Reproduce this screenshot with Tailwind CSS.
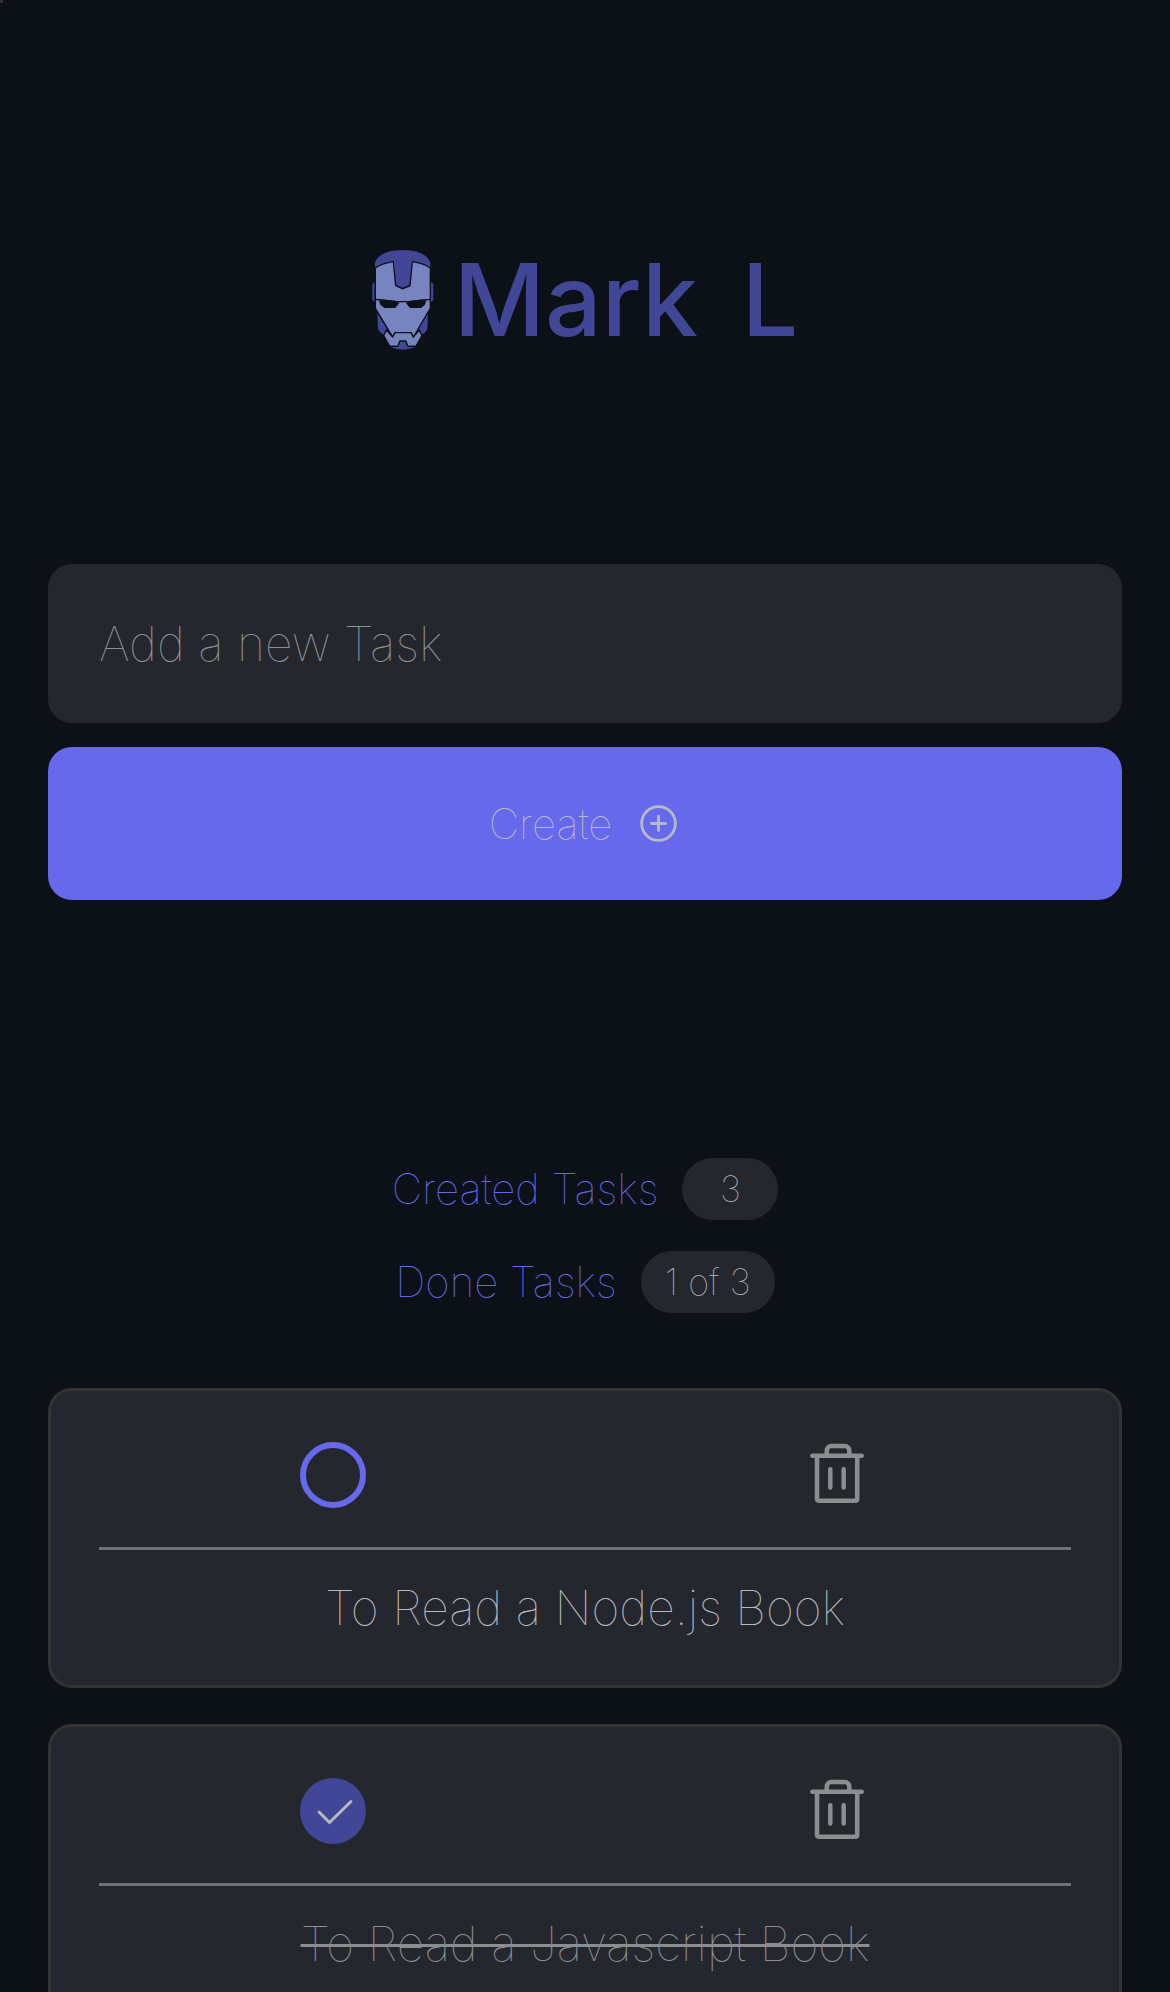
<!DOCTYPE html>
<html lang="en">
<head>
<meta charset="utf-8">
<meta name="viewport" content="width=device-width, initial-scale=1">
<title>Mark L</title>
<script src="https://cdn.jsdelivr.net/npm/@tailwindcss/browser@4"></script>
</head>
<body class="h-screen overflow-hidden bg-[#0c1117] px-12 font-['Inter',sans-serif] font-thin text-[#b8b9bb]">
<div class="absolute left-0 top-0 size-[3px] bg-[#2e3138]"></div>

<header class="flex h-[564px] items-center justify-center gap-5 pt-9">
  <svg class="h-[100px] w-[62px]" viewBox="33 30 186 300" aria-hidden="true">
    <path fill="#424697" d="M41 126L34 132V180L41 186ZM210 126L217 132V180L210 186Z"/>
    <path fill="#424697" d="M42 85V68Q55 31 125 30Q195 31 208 68V85Z"/>
    <path fill="#424697" d="M49 220L51 267Q58 281 70 284L79 268ZM201 220L199 267Q192 281 180 284L171 268Z"/>
    <path fill="#424697" d="M90 322Q125 336 161 322L137 315L132 303H118L113 315Z"/>
    <g fill="#7784c0" stroke="#0c1117" stroke-width="4" stroke-linejoin="miter">
      <path d="M43 84Q65 69 97 65L104 137L125 146L147 137L154 65Q186 69 208 84V178Q177 180 145 185H106Q74 180 43 178Z"/>
      <path d="M43 178Q74 180 106 185H145Q177 180 208 178V205L157 291L150 278H102L95 291L43 205Z"/>
      <path d="M76 270L95 291L102 278H150L157 291L175 270L183 287L165 318L141 319L134 303H117L110 319L86 318L68 287Z"/>
    </g>
    <path fill="#424697" d="M99 64L106 135L125 143L145 135L152 64Z"/>
    <path fill="#0c1117" d="M54 181Q83 181 107 186L116 188L103 204H70L58 194ZM196 181Q167 181 143 186L134 188L147 204H180L192 194Z"/>
  </svg>
  <h1 class="flex gap-11 text-[100px] font-medium leading-none text-[#424697]"><span>Mark</span> <span>L</span></h1>
</header>

<main>
  <form class="flex flex-col gap-6">
    <input type="text" aria-label="New task" placeholder="Add a new Task" class="h-[159px] w-full rounded-3xl bg-[#24272e] px-[51px] text-[48px] outline-none placeholder:text-[#8d9092]">
    <button type="button" class="flex h-[153px] w-full items-center justify-center gap-6 rounded-3xl bg-[#6669eb] text-[42px] text-[#b9bac0]">
      Create
      <svg class="size-[45px]" viewBox="0 0 256 256" fill="none" stroke="currentColor" stroke-width="16" stroke-linecap="round" aria-hidden="true"><circle cx="128" cy="128" r="96"/><path d="M88 128h80M128 88v80"/></svg>
    </button>
  </form>

  <section class="mt-[258px] flex flex-col items-center gap-[31px]">
    <p class="flex items-center gap-6"><span class="text-[42px] leading-[62px] text-[#6669eb]">Created Tasks</span><span class="flex h-[62px] w-24 items-center justify-center rounded-full bg-[#24272e] text-[36px]">3</span></p>
    <p class="flex items-center gap-6"><span class="text-[42px] leading-[62px] text-[#6669eb]">Done Tasks</span><span class="flex h-[62px] items-center justify-center rounded-full bg-[#24272e] px-6 text-[36px]">1 of 3</span></p>
  </section>

  <ul class="mt-[75px] flex flex-col gap-9">
    <li class="h-[300px] rounded-3xl border-3 border-[#333333] bg-[#24272e] px-12 pt-12">
      <div class="grid h-[111px] grid-cols-2 items-start justify-items-center gap-9 border-b-3 border-[#6e7276]">
        <input type="checkbox" aria-label="To Read a Node.js Book" class="mt-[3px] size-[66px] appearance-none rounded-full border-6 border-[#6669eb]">
        <button type="button" aria-label="Delete task" class="text-[#8a8e90]">
          <svg class="size-[72px]" viewBox="0 0 72 72" fill="none" stroke="currentColor" stroke-width="4.5" stroke-linecap="round" stroke-linejoin="round" aria-hidden="true"><path d="M11.3 16.7H60.7M16 16.7V60a1.7 1.7 0 0 0 1.7 1.7H54.5a1.7 1.7 0 0 0 1.7-1.7V16.7M29.3 30.2V48.5M42.7 30.2V48.5M25.8 16.7V11.5a4.5 4.5 0 0 1 4.5-4.5H43.8a4.5 4.5 0 0 1 4.5 4.5V16.7"/></svg>
        </button>
      </div>
      <p class="mt-7 text-center text-[48px] leading-[60px]">To Read a Node.js Book</p>
    </li>
    <li class="h-[300px] rounded-3xl border-3 border-[#333333] bg-[#24272e] px-12 pt-12">
      <div class="grid h-[111px] grid-cols-2 items-start justify-items-center gap-9 border-b-3 border-[#6e7276]">
        <label class="relative mt-[3px] size-[66px]">
          <input type="checkbox" checked aria-label="To Read a Javascript Book" class="block size-[66px] appearance-none rounded-full bg-[#424697]">
          <svg class="absolute inset-0 size-[66px]" viewBox="0 0 66 66" fill="none" stroke="#b8b9bb" stroke-width="3" stroke-linecap="round" aria-hidden="true"><path d="M19 34L29.5 44.5L51 23.5"/></svg>
        </label>
        <button type="button" aria-label="Delete task" class="text-[#8a8e90]">
          <svg class="size-[72px]" viewBox="0 0 72 72" fill="none" stroke="currentColor" stroke-width="4.5" stroke-linecap="round" stroke-linejoin="round" aria-hidden="true"><path d="M11.3 16.7H60.7M16 16.7V60a1.7 1.7 0 0 0 1.7 1.7H54.5a1.7 1.7 0 0 0 1.7-1.7V16.7M29.3 30.2V48.5M42.7 30.2V48.5M25.8 16.7V11.5a4.5 4.5 0 0 1 4.5-4.5H43.8a4.5 4.5 0 0 1 4.5 4.5V16.7"/></svg>
        </button>
      </div>
      <p class="mt-7 text-center text-[48px] leading-[60px] text-[#8a8e90]"><s class="decoration-3">To Read a Javascript Book</s></p>
    </li>
  </ul>
</main>
</body>
</html>
